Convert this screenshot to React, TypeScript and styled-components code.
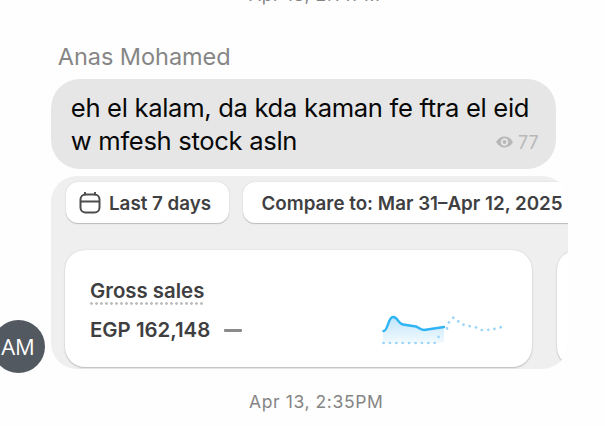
import React from "react";
import styled, { createGlobalStyle } from "styled-components";

const GlobalStyle = createGlobalStyle`
  * { box-sizing: border-box; }
  body { margin: 0; background: #fefefe; overflow: hidden; }
`;

const Screen = styled.main`
  width: 605px;
  height: 426px;
  display: flow-root;
  overflow: hidden;
  background: #fefefe;
  font-family: Inter, "Liberation Sans", sans-serif;
`;

const Timestamp = styled.time<{ $top: number }>`
  display: block;
  width: max-content;
  margin: ${(p) => p.$top}px 0 0 249px;
  font-size: 17.5px;
  line-height: 22px;
  letter-spacing: 0.6px;
  color: #858585;
  white-space: nowrap;
`;

const MessageGroup = styled.section`
  display: grid;
  grid-template-columns: 51.3px 516.7px;
  align-items: end;
`;

const Sender = styled.h2`
  grid-column: 2;
  margin: 36px 0 0 6.5px;
  font-size: 23.5px;
  font-weight: 400;
  line-height: 30px;
  letter-spacing: -0.05px;
  color: #868686;
`;

const Bubble = styled.article`
  grid-column: 2;
  width: 504.5px;
  height: 90px;
  margin-top: 7.5px;
  padding: 12.3px 17px 0 19.5px;
  border-radius: 29px;
  background: #e6e6e6;
`;

const MessageLine = styled.p`
  margin: 0;
  font-size: 25.6px;
  line-height: 33px;
  letter-spacing: -0.32px;
  color: #080808;
  white-space: nowrap;
`;

const LastLine = styled.div`
  display: flex;
  justify-content: space-between;
`;

const Views = styled.span`
  display: flex;
  align-items: center;
  gap: 5px;
  height: 36px;
  font-size: 18px;
  color: #b8b8b8;
`;

const Avatar = styled.div`
  width: 53px;
  height: 53px;
  margin: 0 0 -3.5px -8.5px;
  display: flex;
  align-items: center;
  justify-content: center;
  border-radius: 50%;
  background: #525961;
  color: #fff;
  font-family: "Open Sans", sans-serif;
  font-size: 22px;
`;

const Attachment = styled.article`
  height: 193px;
  margin-top: 7px;
  padding: 6px 0 0 13.7px;
  overflow: hidden;
  border-radius: 26px;
  background: #efefef;
  color: #3f3f42;
  font-weight: 600;
`;

const Filters = styled.div`
  display: flex;
  gap: 14px;
  padding-left: 1px;
`;

const Chip = styled.button<{ $width: number; $pad: number }>`
  flex: none;
  display: flex;
  align-items: center;
  gap: 8px;
  width: ${(p) => p.$width}px;
  height: 41px;
  padding: 1px 0 0 ${(p) => p.$pad}px;
  border: 0;
  border-radius: 12px;
  background: #fff;
  box-shadow: 0 1px 1px #bcbcbc, 0 0 1.5px #ccc;
  font: inherit;
  font-size: 18.8px;
  color: inherit;
  white-space: nowrap;
`;

const Cards = styled.div`
  display: flex;
  gap: 25px;
  margin-top: 27px;
`;

const MetricCard = styled.section`
  flex: none;
  display: flex;
  justify-content: space-between;
  width: 467px;
  height: 116.5px;
  padding: 0 24px 0 25px;
  border-radius: 20px;
  background: #fff;
  box-shadow: 0 1px 1.5px #bcbcbc, 0 0 1.5px #ccc;
`;

const MetricText = styled.div`
  padding-top: 27.6px;
`;

const MetricTitle = styled.h3`
  width: 115px;
  height: 27px;
  margin: 0;
  font-size: 20.4px;
  font-weight: 600;
  line-height: 25px;
  white-space: nowrap;
  background: radial-gradient(circle at 1.5px 1.5px, #bdbdbd 1.1px, transparent 1.6px) 0 100% / 5px 3px repeat-x;
`;

const MetricValue = styled.div`
  display: flex;
  align-items: center;
  gap: 13.5px;
  height: 26px;
  margin-top: 12px;
  font-size: 20.4px;
  white-space: nowrap;
`;

const NoChange = styled.span`
  width: 18.5px;
  height: 2.5px;
  margin-top: 1.5px;
  border-radius: 1px;
  background: #8b8b8b;
`;

const Sparkline = styled.svg`
  width: 130px;
  height: 40px;
  margin-top: 59.6px;
`;

const EyeIcon = () => (
  <svg width="17" height="12" viewBox="0 0 17 12">
    <path d="M0 6C2 2.5 5 .5 8.5.5S15 2.5 17 6c-2 3.5-5 5.5-8.5 5.5S2 9.5 0 6Z" fill="#b8b8b8" />
    <circle cx="8.5" cy="6" r="2.8" fill="none" stroke="#e6e6e6" strokeWidth="1.8" />
  </svg>
);

const CalendarIcon = () => (
  <svg width="22" height="22" viewBox="0 0 22 22" fill="none" stroke="#4d4d4f" strokeWidth="2">
    <rect x="1.5" y="2.5" width="19" height="18" rx="5" />
    <path d="M2 9.5H20M6 .8V2.5M16 .8V2.5" strokeLinecap="round" />
  </svg>
);

const SalesTrend = () => (
  <Sparkline viewBox="0 0 130 40">
    <defs>
      <linearGradient id="fill" x1="0" y1="0" x2="0" y2="1">
        <stop offset="0" stopColor="#bfe5f9" />
        <stop offset="1" stopColor="#f3fafe" />
      </linearGradient>
    </defs>
    <path d="M5 21C10 21 10 7 15 7S20 14 25 14.5L38 16.5C41 17.5 42 20 46 20L66 17V33H5Z" fill="url(#fill)" />
    <path
      d="M5.5 33H58M60.5 27L64 22.5M69 18.5L71 12L75.5 7.5L80 11C82 14 86 15 93 16.5C99 16 100 20 104 20C112 20 117 19 123.5 17"
      fill="none" stroke="#9bd6f7" strokeWidth="2.7" strokeLinecap="round" strokeDasharray="0.1 6.3"
    />
    <path d="M5.5 21C10 21 10 7 15 7S20 14 25 14.5L38 16.5C41 17.5 42 20 46 20L66 17" fill="none" stroke="#2fb4f5" strokeWidth="2.4" strokeLinecap="round" />
  </Sparkline>
);

export default function App() {
  return (
    <>
      <GlobalStyle />
      <Screen>
        <Timestamp $top={-16.5}>Apr 13, 2:14PM</Timestamp>
        <MessageGroup>
          <Sender>Anas Mohamed</Sender>
          <Bubble>
            <MessageLine>eh el kalam, da kda kaman fe ftra el eid</MessageLine>
            <LastLine>
              <MessageLine>w mfesh stock asln</MessageLine>
              <Views><EyeIcon />77</Views>
            </LastLine>
          </Bubble>
          <Avatar>AM</Avatar>
          <Attachment>
            <Filters>
              <Chip $width={163} $pad={13}><CalendarIcon />Last 7 days</Chip>
              <Chip $width={420} $pad={18.5}>Compare to: Mar 31–Apr 12, 2025</Chip>
            </Filters>
            <Cards>
              <MetricCard>
                <MetricText>
                  <MetricTitle>Gross sales</MetricTitle>
                  <MetricValue>EGP 162,148<NoChange /></MetricValue>
                </MetricText>
                <SalesTrend />
              </MetricCard>
              <MetricCard />
            </Cards>
          </Attachment>
        </MessageGroup>
        <Timestamp $top={22}>Apr 13, 2:35PM</Timestamp>
      </Screen>
    </>
  );
}
